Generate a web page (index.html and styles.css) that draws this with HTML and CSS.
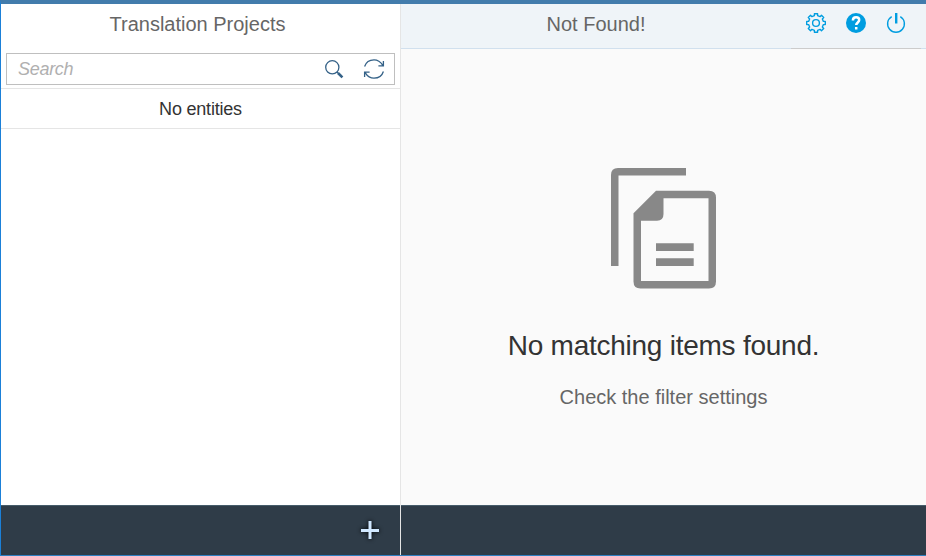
FILE: index.html
```
<!DOCTYPE html>
<html lang="en">
<head>
<meta charset="utf-8">
<title>Translation Projects</title>
<link rel="stylesheet" href="styles.css">
</head>
<body>
<div class="app">
  <section class="master">
    <header class="bar"><h1 class="title">Translation Projects</h1></header>
    <div class="search-row">
      <div class="search">
        <span class="placeholder">Search</span>
        <svg class="icon" viewBox="0 0 20 20"><circle cx="8.300" cy="8.300" r="6.600"/><path d="M13 13l1.400 1.400"/><path class="handle" d="M14 14l4.400 4.400"/></svg>
        <svg class="icon" viewBox="0 0 20 20"><path d="M.6 7.500C2 3.200 5.600.8 10 .8c4 0 6.600 2 8.700 5.400M19.400 2v4.900h-5M19.400 12.500C18 16.800 14.400 19.200 10 19.200c-4 0-6.600-2-8.700-5.400M.6 18v-4.900h5"/></svg>
      </div>
    </div>
    <div class="empty-row">No entities</div>
    <div class="body"></div>
    <footer class="footer">
      <svg class="add" viewBox="0 0 18 18"><path d="M9 0v18M0 9.500h18"/></svg>
    </footer>
  </section>
  <section class="detail">
    <header class="bar detail-bar">
      <h1 class="title">Not Found!</h1>
      <div class="actions">
        <svg class="icon" viewBox="-10 -10 20 20"><path stroke-linejoin="round" d="M-1.600-7.400V-9.300H1.600V-7.400L4.100-6.360 5.450-7.710 7.710-5.450 6.360-4.100 7.400-1.600H9.300V1.600H7.400L6.360 4.100 7.710 5.450 5.450 7.710 4.100 6.360 1.600 7.400V9.300H-1.600V7.400L-4.100 6.360-5.450 7.710-7.710 5.450-6.360 4.100-7.400 1.600H-9.300V-1.600H-7.400L-6.360-4.100-7.710-5.450-5.450-7.710-4.100-6.360Z"/><circle r="3.400"/></svg>
        <svg class="icon" viewBox="-10 -10 20 20"><circle class="disc" r="10"/><path class="mark" d="M-3.100-2.600C-3.100-4.700-1.800-5.700.1-5.700S3.200-4.600 3.200-2.900C3.200-.6.200-.5.200 2.100"/><path class="mark" d="M.2 4v2.500"/></svg>
        <svg class="icon" viewBox="-10 -10 20 20"><path d="M-4.300-6.400A8.400 8.400 0 1 0 4.300-6.400"/><path class="bold" d="M.2-10V.5"/></svg>
      </div>
    </header>
    <main class="message">
      <svg class="documents" viewBox="0 0 105 121">
        <path d="M0 98V7Q0 0 7 0H75V7.500H7.500V98Z"/>
        <path fill-rule="evenodd" d="M45 22.700H98Q105 22.700 105 29.700V113.500Q105 120.500 98 120.500H29.500Q22.500 120.500 22.500 113.500V45.200ZM52.500 30.200V46Q52.500 52.700 46 52.700H30V113H97.500V30.200Z"/>
        <path d="M45 75.200H82.700V83H45ZM45 90.200H82.700V98H45Z"/>
      </svg>
      <h2 class="message-title">No matching items found.</h2>
      <p class="message-hint">Check the filter settings</p>
    </main>
    <footer class="footer"></footer>
  </section>
</div>
</body>
</html>
```
FILE: styles.css
```
* { box-sizing: border-box; }
body { margin: 0; font-family: "Liberation Sans", Arial, sans-serif; }
h1, h2, p { margin: 0; font-weight: 400; }
.app {
  display: flex;
  height: 556px;
  overflow: hidden;
  border-top: 4px solid #427cac;
  border-left: 1px solid #1b80d8;
  border-bottom: 1px solid #2f7fc1;
}
.master {
  width: 400px;
  display: flex;
  flex-direction: column;
  background: #fff;
  border-right: 1px solid #e5e5e5;
}
.detail {
  flex: 1;
  min-width: 0;
  display: flex;
  flex-direction: column;
  background: #fafafa;
}
.bar { height: 45px; flex: none; padding: 8px 6px 0 0; text-align: center; }
.title { font-size: 20px; line-height: 24px; color: #666; }
.detail-bar {
  display: flex;
  padding: 0 5px 0 0;
  background: #eff4f8;
  border-bottom: 1px solid #d1e0ee;
}
.detail-bar .title { flex: 1; padding: 8px 0 0; }
.actions {
  display: flex;
  gap: 20px;
  width: 130px;
  height: 45px;
  padding: 9px 0 0 15px;
  border-bottom: 1px solid #ccc;
}
.icon {
  flex: none;
  width: 20px;
  height: 20px;
  overflow: visible;
  fill: none;
  stroke: #009de0;
  stroke-width: 1.4;
}
.icon .bold { stroke-width: 2.4; }
.icon .disc { fill: #009de0; stroke: none; }
.icon .mark { stroke: #fff; stroke-width: 2.5; }
.search-row { height: 40px; padding: 4px 5px 0; border-bottom: 1px solid #e5e5e5; }
.search {
  display: flex;
  align-items: center;
  gap: 20px;
  height: 32px;
  padding: 0 10px 0 11px;
  border: 1px solid #bfbfbf;
}
.search .icon { stroke: #346187; stroke-width: 1.3; }
.search .handle { stroke-width: 2.6; }
.placeholder { flex: 1; font-size: 18px; font-style: italic; letter-spacing: -0.3px; color: #b0b0b0; }
.empty-row {
  height: 40px;
  line-height: 41px;
  text-align: center;
  font-size: 18px;
  letter-spacing: -0.2px;
  color: #333;
  border-bottom: 1px solid #e5e5e5;
}
.body { flex: 1; }
.footer {
  display: flex;
  justify-content: flex-end;
  align-items: center;
  height: 50px;
  flex: none;
  padding: 0 21px 1px 0;
  background: #2f3c48;
  border-top: 1px solid #465c6a;
}
.add {
  width: 18px;
  height: 18px;
  overflow: visible;
  fill: none;
  stroke: #d1e8ff;
  stroke-width: 3;
  filter: drop-shadow(0 0 2px #000);
}
.message {
  flex: 1;
  display: flex;
  flex-direction: column;
  align-items: center;
  padding-top: 119px;
}
.documents { width: 105px; height: 121px; fill: #888; }
.message-title {
  margin-top: 40px;
  font-size: 28px;
  line-height: 34px;
  letter-spacing: -0.25px;
  color: #333;
}
.message-hint { margin-top: 22px; font-size: 20px; line-height: 24px; color: #666; }
```
